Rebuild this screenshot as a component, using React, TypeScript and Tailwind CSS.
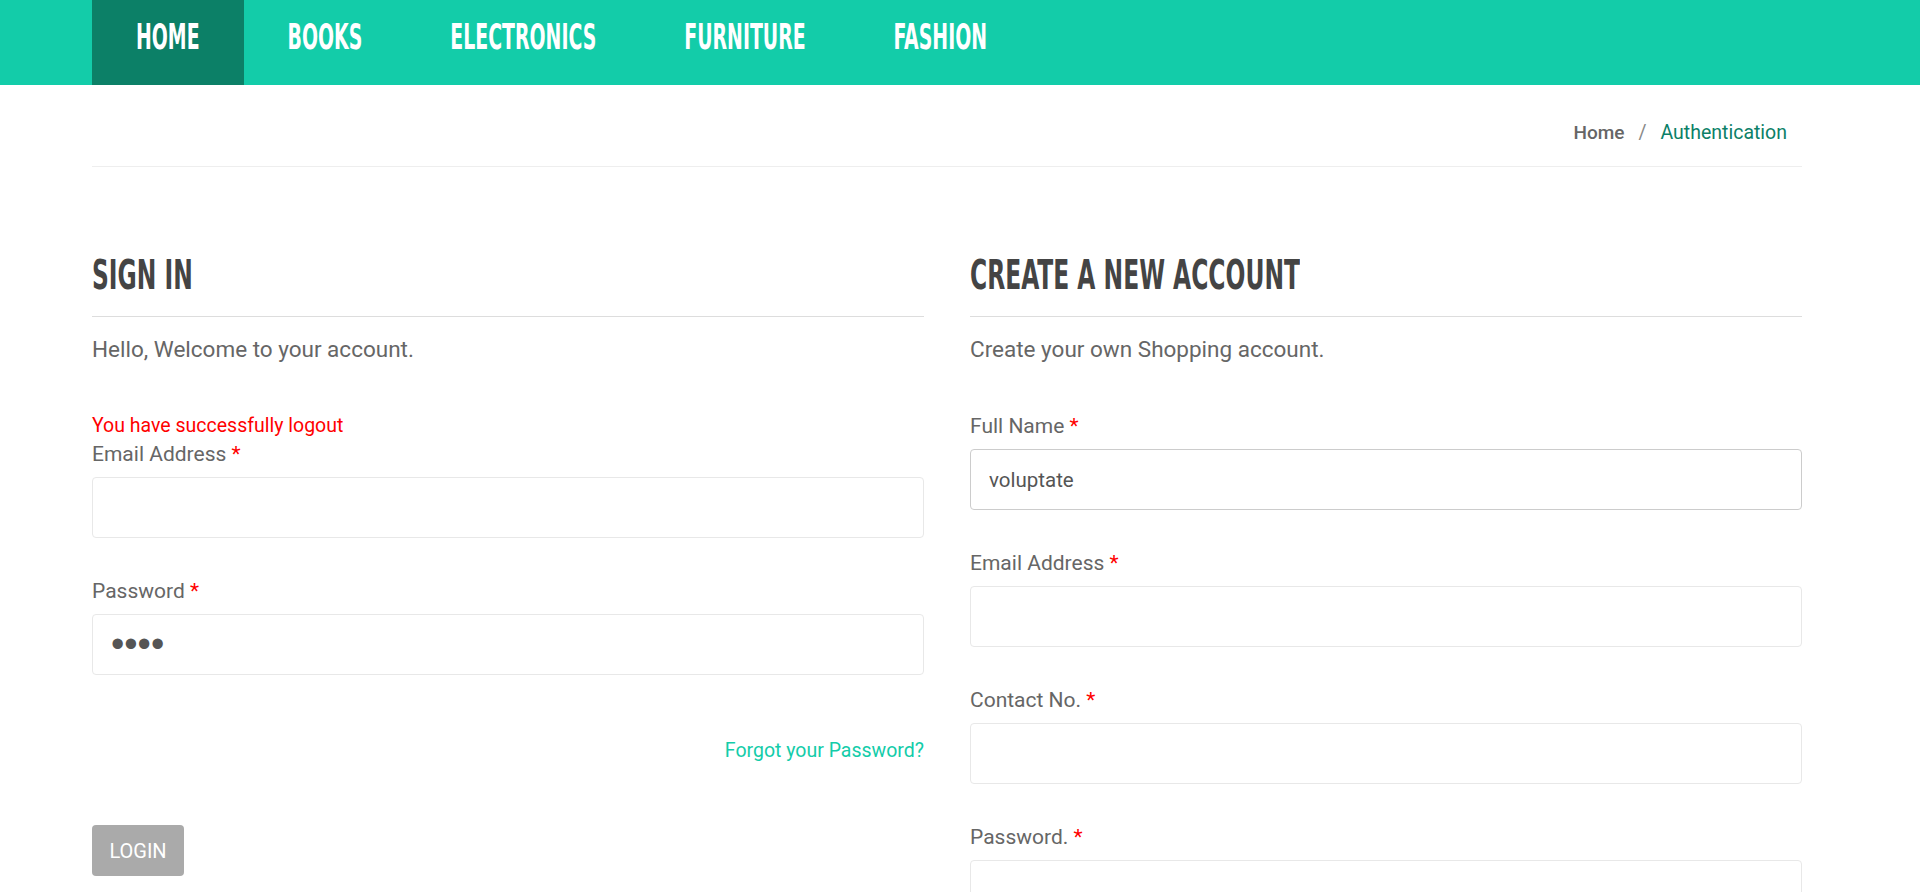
import { useState } from "react";

const navItems = ["HOME", "BOOKS", "ELECTRONICS", "FURNITURE", "FASHION"];

function Label({ text }: { text: string }) {
  return (
    <label className="mb-[9px] block text-[21px] leading-[28px] text-[#666666]">
      {text} <span className="text-[#ff0000]">*</span>
    </label>
  );
}

function Heading({ text }: { text: string }) {
  return (
    <h2 className="flex border-b border-[#dddddd] pb-[21px]">
      <span className="block h-[40px] scale-y-[1.58] font-['DejaVu_Sans_Condensed',sans-serif] text-[26px] font-bold leading-[40px] text-[#444444]">
        {text}
      </span>
    </h2>
  );
}

export default function App() {
  const [fullName, setFullName] = useState("voluptate");
  const [password, setPassword] = useState("1234");

  const inputClass =
    "block h-[61px] w-full rounded-[4px] border border-[#e8e8e8] bg-white px-[18px] text-[20px] text-[#555555] outline-none";

  return (
    <div className="min-h-screen bg-white font-['Roboto',sans-serif]">
      <nav className="h-[85px] bg-[#13cca9]">
        <ul className="ml-[92px] flex h-full">
          {navItems.map((item, i) => (
            <li
              key={item}
              className={`flex h-full items-center px-[44px] pb-[9px] ${i === 0 ? "bg-[#0c8067]" : ""}`}
            >
              <span className="block scale-y-[1.67] font-['DejaVu_Sans_Condensed',sans-serif] text-[21px] font-bold leading-none text-white">
                {item}
              </span>
            </li>
          ))}
        </ul>
      </nav>

      <div className="ml-[92px] w-[1710px]">
        <div className="flex justify-end border-b border-[#eeeeee] pt-[36px] pr-[15px] pb-[21px] text-[19.5px] leading-[24px]">
          <span className="text-[19px] font-medium text-[#666666]">Home</span>
          <span className="px-[14px] text-[#888888]">/</span>
          <span className="text-[#0c8067]">Authentication</span>
        </div>

        <div className="grid grid-cols-2 gap-[46px] pt-[88px]">
          {/* sign in */}
          <div>
            <Heading text="SIGN IN" />
            <p className="mt-[18px] text-[22.5px] leading-[28px] text-[#666666]">Hello, Welcome to your account.</p>
            <div className="mt-[48px]">
              <p className="text-[19.5px] leading-[29px] text-[#ff0000]">You have successfully logout</p>
              <Label text="Email Address" />
              <input className={inputClass} />
              <div className="mt-[39px]">
                <Label text="Password" />
                <input
                  type="password"
                  className="block h-[61px] w-full rounded-[4px] border border-[#e8e8e8] bg-white px-[18px] font-['Liberation_Sans',sans-serif] text-[38px] text-[#555555] outline-none"
                  value={password}
                  onChange={(e) => setPassword(e.target.value)}
                />
              </div>
              <div className="mt-[62px] text-right text-[19.5px] leading-[28px] text-[#13cca9]">
                <a href="#">Forgot your Password?</a>
              </div>
              <button className="mt-[60px] h-[51px] w-[92px] rounded-[4px] bg-[#aaaaaa] text-[20px] text-white">
                LOGIN
              </button>
            </div>
          </div>

          {/* create account */}
          <div>
            <Heading text="CREATE A NEW ACCOUNT" />
            <p className="mt-[18px] text-[22.5px] leading-[28px] text-[#666666]">Create your own Shopping account.</p>
            <div className="mt-[49px] flex flex-col gap-[39px] pb-[60px]">
              <div>
                <Label text="Full Name" />
                <input
                  className="block h-[61px] w-full rounded-[4px] border border-[#cccccc] bg-white px-[18px] text-[20.5px] text-[#555555] outline-none"
                  value={fullName}
                  onChange={(e) => setFullName(e.target.value)}
                />
              </div>
              <div>
                <Label text="Email Address" />
                <input className={inputClass} />
              </div>
              <div>
                <Label text="Contact No." />
                <input className={inputClass} />
              </div>
              <div>
                <Label text="Password." />
                <input type="password" className={inputClass} />
              </div>
            </div>
          </div>
        </div>
      </div>
    </div>
  );
}
